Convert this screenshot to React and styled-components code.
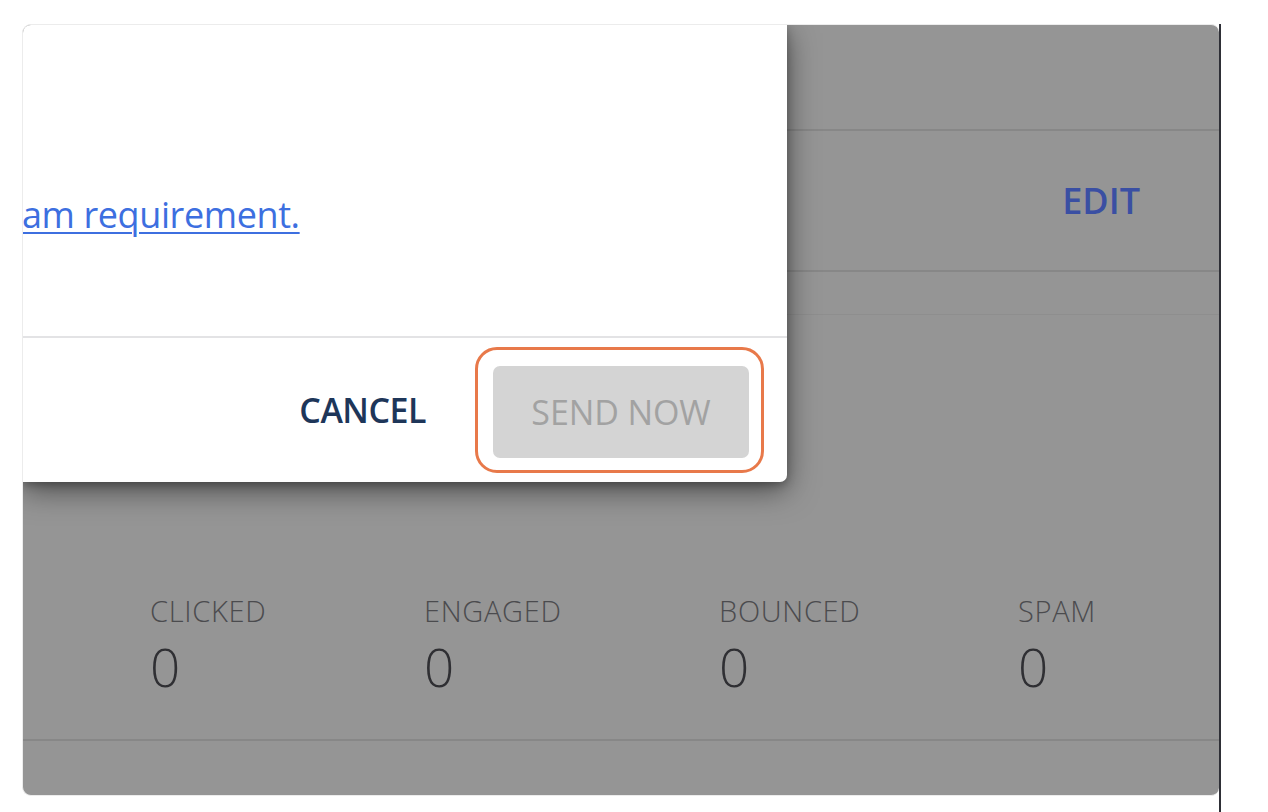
import React from "react";
import styled, { createGlobalStyle } from "styled-components";

const GlobalStyle = createGlobalStyle`
  html, body {
    margin: 0;
    padding: 0;
    background: #ffffff;
  }
  body {
    font-family: "Open Sans", "Noto Sans", sans-serif;
  }
  * { box-sizing: border-box; }
`;

const Stage = styled.div`
  display: flex;
  align-items: flex-start;
  height: 812px;
  padding: 24px 0 0 22px;
  overflow: hidden;
`;

const Frame = styled.div`
  position: relative;
  flex: 0 0 1197px;
  height: 772px;
  border: 1px solid #ececec;
  border-right: none;
  border-radius: 9px 8px 8px 9px;
  background: #959595;
  overflow: hidden;
  display: flex;
  flex-direction: column;
`;

const EdgeLine = styled.div`
  flex: 0 0 2px;
  align-self: stretch;
  background: #2e2f36;
`;

const Row = styled.div`
  flex: 0 0 ${(p) => p.$h}px;
  display: flex;
  align-items: ${(p) => p.$align || "center"};
  justify-content: ${(p) => p.$justify || "flex-start"};
  border-bottom: ${(p) => p.$line || "none"};
  padding: ${(p) => p.$pad || "0"};
`;

const EditLink = styled.span`
  font-size: 36px;
  font-weight: 600;
  color: #3a4fa3;
  letter-spacing: 0;
`;

const StatsGrid = styled.div`
  display: grid;
  grid-template-columns: 274px 295px 299px 1fr;
  padding-left: 127px;
  width: 100%;
`;

const Stat = styled.div`
  display: flex;
  flex-direction: column;
`;

const StatLabel = styled.span`
  font-size: 29px;
  font-weight: 300;
  line-height: 38px;
  color: #4b4b4e;
  letter-spacing: 0.7px;
`;

const StatValue = styled.span`
  font-size: 53px;
  font-weight: 300;
  line-height: 53px;
  margin-top: 10px;
  color: #2f2f33;
`;

const Modal = styled.div`
  position: absolute;
  left: 0;
  top: 0;
  width: 764px;
  height: 457px;
  background: #ffffff;
  border-bottom-right-radius: 7px;
  box-shadow: 0 8px 30px rgba(0, 0, 0, 0.5), 0 3px 8px rgba(0, 0, 0, 0.25);
  display: flex;
  flex-direction: column;
`;

const ModalBody = styled.div`
  flex: 0 0 313px;
  padding-top: 167px;
  border-bottom: 2px solid #e3e3e5;
`;

const RuleLink = styled.a`
  font-size: 36px;
  line-height: 46px;
  color: #3d6fe0;
  text-decoration: underline;
  text-decoration-thickness: 2px;
  text-underline-offset: 4px;
  letter-spacing: -0.4px;
  margin-left: -1px;
  cursor: pointer;
`;

const ModalFooter = styled.div`
  flex: 1;
  display: flex;
  align-items: center;
  justify-content: flex-end;
  padding-right: 23px;
  gap: 49px;
`;

const TextButton = styled.button`
  border: none;
  background: none;
  padding: 0;
  font-family: inherit;
  font-size: 34px;
  font-weight: 600;
  color: #1e3659;
  letter-spacing: -0.5px;
`;

const Highlight = styled.div`
  border: 3px solid #e8794a;
  border-radius: 22px;
  padding: 16px 12px 12px 15px;
`;

const DisabledButton = styled.button`
  width: 256px;
  height: 92px;
  border: none;
  border-radius: 7px;
  background: #d4d4d4;
  font-family: inherit;
  font-size: 34px;
  font-weight: 400;
  color: #a2a2a2;
  letter-spacing: -0.1px;
`;

const stats = [
  { label: "CLICKED", value: 0 },
  { label: "ENGAGED", value: 0 },
  { label: "BOUNCED", value: 0 },
  { label: "SPAM", value: 0 },
];

export default function App() {
  return (
    <>
      <GlobalStyle />
      <Stage>
        <Frame>
          <Row $h={106} $line="2px solid #878787" />
          <Row $h={141} $justify="flex-end" $pad="0 79px 0 0" $line="2px solid #878787">
            <EditLink>EDIT</EditLink>
          </Row>
          <Row $h={43} $line="1px solid #8e8e8e" />
          <Row $h={426} $align="flex-start" $pad="277px 0 0 0" $line="2px solid #878787">
            <StatsGrid>
              {stats.map((s) => (
                <Stat key={s.label}>
                  <StatLabel>{s.label}</StatLabel>
                  <StatValue>{s.value}</StatValue>
                </Stat>
              ))}
            </StatsGrid>
          </Row>
          <Row $h={60} />

          <Modal>
            <ModalBody>
              <RuleLink>am requirement.</RuleLink>
            </ModalBody>
            <ModalFooter>
              <TextButton>CANCEL</TextButton>
              <Highlight>
                <DisabledButton disabled>SEND NOW</DisabledButton>
              </Highlight>
            </ModalFooter>
          </Modal>
        </Frame>
        <EdgeLine />
      </Stage>
    </>
  );
}
